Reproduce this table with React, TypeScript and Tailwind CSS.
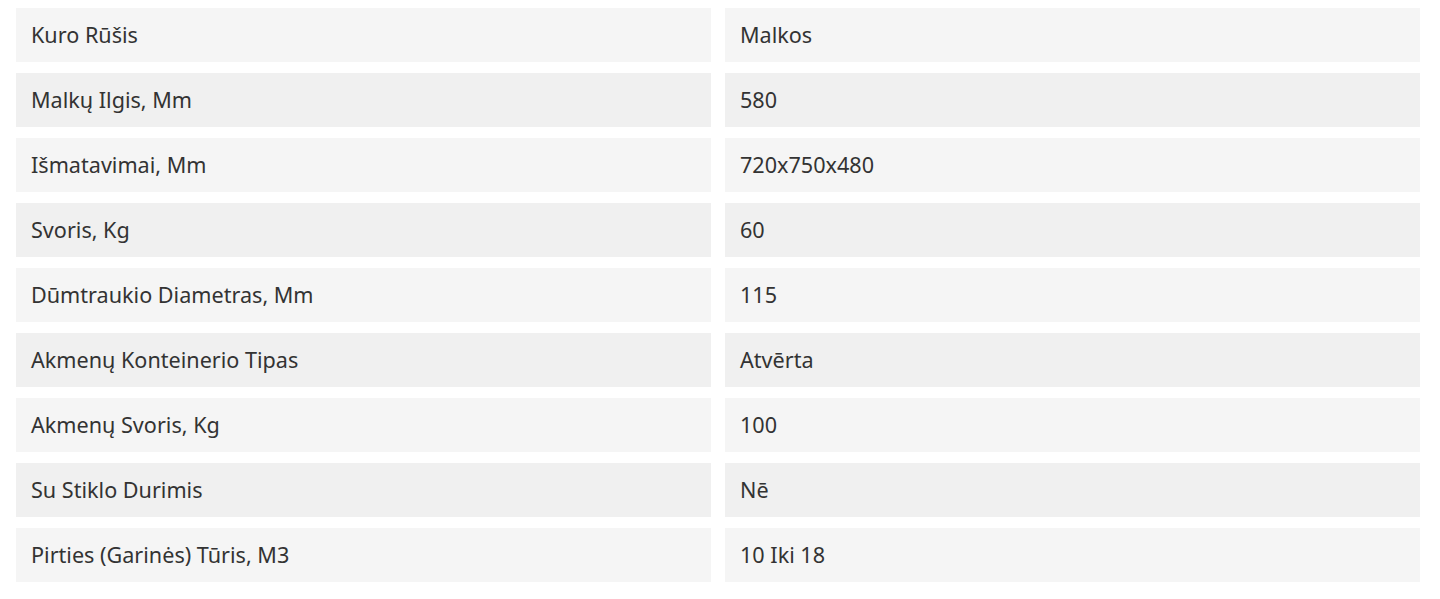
import React from "react";

const rows: [string, string][] = [
  ["Kuro Rūšis", "Malkos"],
  ["Malkų Ilgis, Mm", "580"],
  ["Išmatavimai, Mm", "720x750x480"],
  ["Svoris, Kg", "60"],
  ["Dūmtraukio Diametras, Mm", "115"],
  ["Akmenų Konteinerio Tipas", "Atvērta"],
  ["Akmenų Svoris, Kg", "100"],
  ["Su Stiklo Durimis", "Nē"],
  ["Pirties (Garinės) Tūris, M3", "10 Iki 18"],
];

export default function App() {
  return (
    <div className="w-[1440px] h-[599px] bg-white pt-[8px] pl-[16px]" style={{ fontFamily: '"Noto Sans", "Open Sans", sans-serif' }}>
      <div className="w-[1404px] flex flex-col gap-[11px]">
        {rows.map(([k, v], i) => (
          <div key={i} className="grid grid-cols-2 gap-[14px]">
            <div className={`h-[54px] flex items-center px-[15px] text-[21.6px] text-[#333333] ${i % 2 === 0 ? "bg-[#f5f5f5]" : "bg-[#f0f0f0]"}`}>{k}</div>
            <div className={`h-[54px] flex items-center px-[15px] text-[21.6px] text-[#333333] ${i % 2 === 0 ? "bg-[#f5f5f5]" : "bg-[#f0f0f0]"}`}>{v}</div>
          </div>
        ))}
      </div>
    </div>
  );
}
